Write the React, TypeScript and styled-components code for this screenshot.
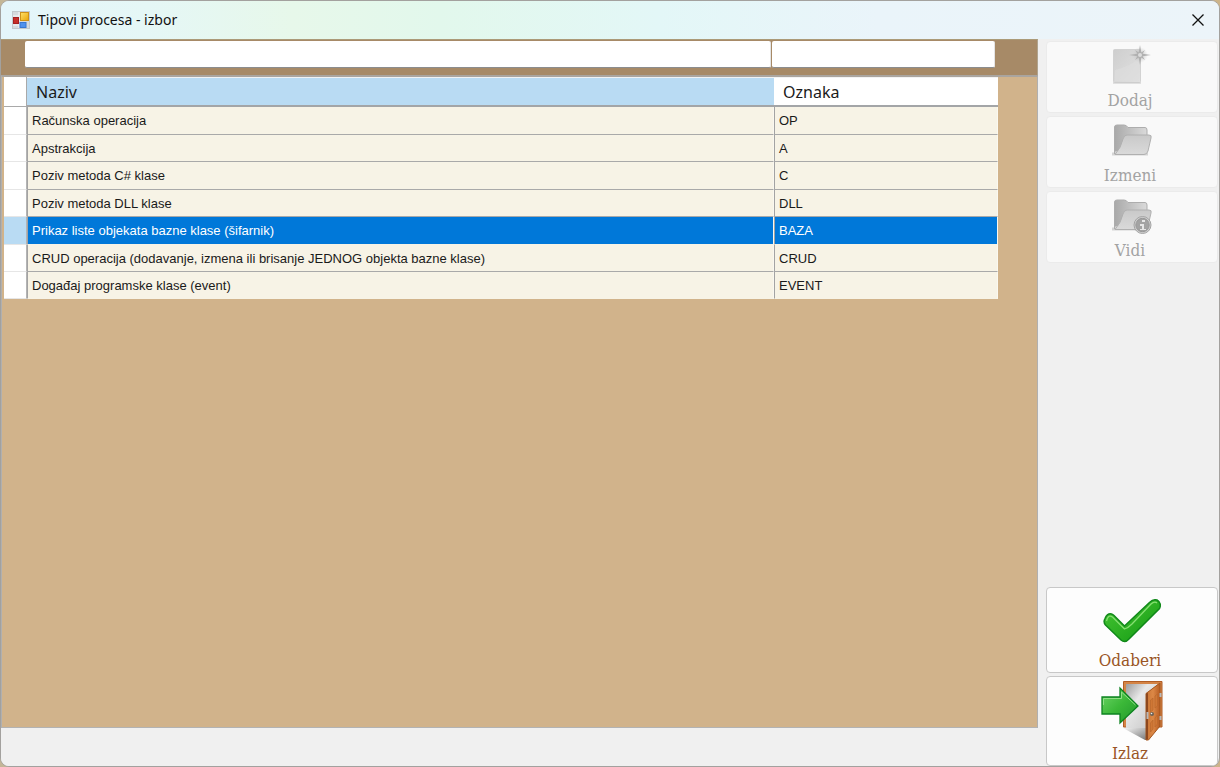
import React from "react";
import styled, { createGlobalStyle } from "styled-components";

const GlobalStyle = createGlobalStyle`
  *, *::before, *::after { box-sizing: border-box; }
  body { margin: 0; background: #b9b0a0; font-family: "Liberation Sans", Arial, sans-serif; }
`;

const Backdrop = styled.div`
  display: flex;
  min-height: 100vh;
  background: linear-gradient(90deg, #c4b697 0%, #a9a59f 12%, #a9a59f 80%, #cdb48a 100%);
`;

const Window = styled.section`
  flex: 1;
  min-width: 0;
  display: flex;
  flex-direction: column;
  border: 1px solid #a3a19e;
  border-radius: 9px;
  overflow: hidden;
  background: #f0f0f0;
`;

const TitleBar = styled.header`
  display: flex;
  align-items: center;
  height: 38px;
  padding-left: 11px;
  gap: 8px;
  background: linear-gradient(90deg, #e4f5fa 0%, #e5f7f6 12%, #e7f8ea 24%, #e2f8ec 36%, #e3f7f7 54%, #eaf4fa 72%, #ecf4f9 100%);
`;

const Title = styled.h1`
  flex: 1;
  margin: 0;
  font: 400 14px/20px "Noto Sans", "Open Sans", sans-serif;
  color: #111;
`;

const CloseButton = styled.button`
  display: flex;
  align-items: center;
  justify-content: center;
  width: 42px;
  height: 38px;
  padding: 0;
  border: 0;
  background: transparent;
`;

const Content = styled.div`
  flex: 1;
  display: flex;
`;

const Main = styled.main`
  flex: 1;
  min-width: 0;
  display: flex;
  flex-direction: column;
`;

const FilterBar = styled.form`
  display: flex;
  gap: 1px;
  height: 36px;
  padding: 1px 42px 7px 24px;
  background: #a78a67;
  border-top: 1px solid #ab9a78;
  border-right: 1px solid #b0a48f;
`;

const FilterInput = styled.input<{ $width?: number }>`
  flex: ${(p) => (p.$width ? `0 0 ${p.$width}px` : "1")};
  min-width: 0;
  height: 27px;
  padding: 0 4px;
  border: 0;
  border-right: 1px solid #e4e4e4;
  border-bottom: 1px solid #8b8d8f;
  border-radius: 2px;
  background: #fff;
  font: 13px "Liberation Sans", Arial, sans-serif;
  outline: none;
`;

const GridArea = styled.div`
  flex: 1;
  padding: 0 39px 0 2px;
  border: 1px solid #b0b0b0;
  border-top: 2px solid #aaa59f;
  border-bottom-color: #b3b3b3;
  background: #d1b38b;
`;

const Table = styled.table`
  width: 100%;
  table-layout: fixed;
  border-collapse: separate;
  border-spacing: 0;
  text-align: left;
`;

const ColumnHead = styled.th<{ $active?: boolean }>`
  height: 30px;
  padding: 0 9px;
  border-bottom: 2px solid #a3a5a7;
  border-top: 1px solid #f2f2f2;
  background: ${(p) => (p.$active ? "#b9dbf3" : "#fff")};
  font: 400 16px/24px "Noto Sans", "Open Sans", sans-serif;
  color: #1b1b1b;
`;

const CornerHead = styled.td`
  background: #fff;
  border-right: 1px solid #a9a9a9;
  border-bottom: 1px solid #a9a9a9;
`;

const Row = styled.tr`
  height: 28px;
  &:nth-child(even), &:last-child { height: 27px; }
`;

const RowHead = styled.td<{ $selected?: boolean }>`
  padding: 0;
  background: ${(p) => (p.$selected ? "#b9dbf3" : "#fff")};
  border-right: 1px solid #b4b4b4;
  border-bottom: 1px solid #e6e6e6;
`;

const Cell = styled.td<{ $selected?: boolean }>`
  padding: 1px 4px 0;
  border-left: 1px solid #a3a3a3;
  border-right: 1px solid #faf8f0;
  border-bottom: 1px solid ${(p) => (p.$selected ? "#f7f3e6" : "#a9a9a9")};
  background: ${(p) => (p.$selected ? "#0078d9" : "#f7f3e6")};
  color: ${(p) => (p.$selected ? "#fff" : "#1a1a1a")};
  font: 13px/20px "Liberation Sans", Arial, sans-serif;
  white-space: nowrap;
  tr:last-child > & { border-bottom-color: #f7f3e6; }
`;

const Footer = styled.footer`
  height: 38px;
  background: #f0f0f0;
`;

const Sidebar = styled.aside`
  display: flex;
  flex-direction: column;
  justify-content: space-between;
  width: 181px;
  padding: 2px 1px 0 8px;
`;

const ButtonGroup = styled.div`
  display: flex;
  flex-direction: column;
  gap: 3px;
`;

const ActionButton = styled.button<{ $height: number; $gap?: number }>`
  display: flex;
  flex-direction: column;
  align-items: center;
  justify-content: flex-end;
  gap: ${(p) => p.$gap ?? 0}px;
  height: ${(p) => p.$height}px;
  padding: 0;
  border: 1px solid #c8c8c8;
  border-radius: 4px;
  background: #fdfdfd;
  color: #9a5526;
  font: 400 17px/24px "DejaVu Serif Condensed", "DejaVu Serif", serif;
  &:disabled {
    border-color: #ebebeb;
    background: #f9f9f9;
    color: #a3a3a3;
  }
`;

const Label = styled.span`
  padding-right: 4px;
`;

const FormIcon = () => (
  <svg width="18" height="18" viewBox="0 0 18 18" aria-hidden="true">
    <defs>
      <linearGradient id="gold" x2="1" y2="1"><stop stopColor="#ffe169" /><stop offset="1" stopColor="#e9a509" /></linearGradient>
    </defs>
    <rect x=".5" y=".5" width="17" height="17" fill="#d5dadd" stroke="#c2c9cd" />
    <path d="M1 5h6M1 14h6M7 1v16" stroke="#f5f7f8" />
    <rect x="1.500" y="6.500" width="5" height="6" fill="#c52f29" stroke="#a61f20" />
    <rect x="8.500" y="1.500" width="8" height="8" fill="url(#gold)" stroke="#cf9219" />
    <rect x="8" y="11.500" width="6" height="5" fill="#4f91ed" stroke="#3777d2" />
  </svg>
);

const CloseIcon = () => (
  <svg width="12" height="12" viewBox="0 0 12 12" aria-hidden="true">
    <path d="M.5.5 11.500 11.500M11.500.5.5 11.500" stroke="#111" strokeWidth="1.300" />
  </svg>
);

const NewIcon = () => (
  <svg width="40" height="40" viewBox="0 0 40 40" aria-hidden="true">
    <defs>
      <linearGradient id="page" x2="1" y2="1"><stop stopColor="#cecece" /><stop offset="1" stopColor="#e1e1e1" /></linearGradient>
      <radialGradient id="glow"><stop stopColor="#b0b0b0" /><stop offset="1" stopColor="#d0d0d0" stopOpacity="0" /></radialGradient>
    </defs>
    <rect x="1.500" y="4.500" width="27" height="33" rx="1" fill="url(#page)" stroke="#d2d2d2" />
    <path d="M3 25Q19 21 27 13V36H3Z" fill="#dedede" opacity=".6" />
    <path d="M1 38h28" stroke="#c8c8c8" />
    <circle cx="28" cy="10" r="8" fill="url(#glow)" />
    <path d="M28 0 29.300 7.500 33 5 30.500 8.700 39 10 30.500 11.300 33 15 29.300 12.500 28 20 26.700 12.500 23 15 25.500 11.300 17 10 25.500 8.700 23 5 26.700 7.500Z" fill="#b0b0b0" />
    <circle cx="28" cy="10" r="2" fill="#dcdcdc" />
  </svg>
);

const FolderIcon = ({ info = false }: { info?: boolean }) => {
  const id = info ? "view" : "edit";
  return (
    <svg width="40" height="38" viewBox="0 0 40 38" aria-hidden="true">
      <defs>
        <linearGradient id={`${id}-back`} x2="1"><stop stopColor="#a9a9a9" /><stop offset="1" stopColor="#dadada" /></linearGradient>
        <linearGradient id={`${id}-front`} x2="0" y2="1"><stop stopColor="#c9c9c9" /><stop offset="1" stopColor="#dadada" /></linearGradient>
      </defs>
      <path d="M0 32h36" stroke="#d5d5d5" strokeWidth="3" />
      <path d="M2.500 32V5Q2.500 3 5 3H12Q14.500 3 16 5.500H33Q35 5.500 35 8V29H3Z" fill={`url(#${id}-back)`} stroke="#adadad" />
      <path d="M3 32.500Q9 26 11 17Q12 13 15 13H37Q40 13 39 16L36 29Q35 32.500 32 32.500Z" fill={`url(#${id}-front)`} stroke="#b0b0b0" />
      {info && (
        <g>
          <circle cx="30.500" cy="28" r="8.500" fill="#d0d0d0" stroke="#a3a3a3" />
          <circle cx="30.500" cy="28" r="6.700" fill="#a3a3a3" stroke="#999" />
          <path d="M30 23h3v2h-3zM28 27h4v5h2v1h-6v-1h2v-3h-2z" fill="#e6e6e6" />
        </g>
      )}
    </svg>
  );
};

const CheckIcon = () => (
  <svg width="58" height="44" viewBox="0 0 58 44" aria-hidden="true">
    <defs>
      <linearGradient id="check" x2="1" y2="1"><stop stopColor="#49c735" /><stop offset="1" stopColor="#119911" /></linearGradient>
    </defs>
    <path d="M2 19.500Q4.500 14 8.500 15Q10 15.500 11 16.500L21.500 27 47 3Q50 0 54 1Q59 4 56.500 9.500L26 40Q22 44.500 18 41L2.500 26Q0 23 2 19.500Z" fill="url(#check)" stroke="#11891a" strokeWidth="1.500" />
    <path d="M3.500 22Q5 15 9.500 18L21.500 30Q25 29 29 25L48 5Q51.500 2 54 4" fill="none" stroke="#86df72" strokeWidth="1.300" />
  </svg>
);

const ExitIcon = () => (
  <svg width="62" height="60" viewBox="0 0 62 60" aria-hidden="true">
    <defs>
      <linearGradient id="room" x2="1" y2="1"><stop stopColor="#9c9c9c" /><stop offset=".35" stopColor="#e8e8e8" /><stop offset="1" stopColor="#c4c4c4" /></linearGradient>
      <linearGradient id="floor" x2="1" y2="1"><stop stopColor="#f6f6f6" /><stop offset="1" stopColor="#777" /></linearGradient>
      <linearGradient id="door" x2="1"><stop stopColor="#c97535" /><stop offset=".5" stopColor="#dc8846" /><stop offset="1" stopColor="#b75d23" /></linearGradient>
      <linearGradient id="arrow" x2="1" y2="1"><stop stopColor="#70d66a" /><stop offset=".5" stopColor="#3bb838" /><stop offset="1" stopColor="#20962c" /></linearGradient>
    </defs>
    <path d="M22.500.500H61V46H22.500Z" fill="#d48446" stroke="#b05c24" />
    <path d="M25 3H57L45 13V47H25Z" fill="url(#room)" />
    <path d="M22 47H46V59H44Z" fill="url(#floor)" />
    <path d="M45 12.500 59 2V45L47.500 59H45Z" fill="url(#door)" stroke="#a3561f" />
    <path d="M45 12.500 47 12V58.500H45Z" fill="#8e481e" />
    <path d="M49.500 19 52 17V29L49.500 31ZM54 15 56.500 13V25L54 27ZM49.500 42 52 39V48L49.500 51ZM54 37 56.500 34V43L54 46Z" fill="#cf7735" stroke="#b9672c" strokeWidth=".7" />
    <path d="M59.500 12v4M59.500 35v4M46.500 31v7" stroke="#b8b8b8" strokeWidth="2" />
    <circle cx="51" cy="33" r="2" fill="#6e6255" />
    <circle cx="50.500" cy="32.500" r=".8" fill="#eee" />
    <path d="M1 16H19V7L37 25 19 42V33H1Z" fill="url(#arrow)" stroke="#0d8220" strokeWidth="1.300" />
    <path d="M2.500 24V17.500H20.500V11L34.500 24" fill="none" stroke="#90df85" />
  </svg>
);

const rows = [
  ["Računska operacija", "OP"],
  ["Apstrakcija", "A"],
  ["Poziv metoda C# klase", "C"],
  ["Poziv metoda DLL klase", "DLL"],
  ["Prikaz liste objekata bazne klase (šifarnik)", "BAZA"],
  ["CRUD operacija (dodavanje, izmena ili brisanje JEDNOG objekta bazne klase)", "CRUD"],
  ["Događaj programske klase (event)", "EVENT"],
];
const selectedCode = "BAZA";

export default function App() {
  return (
    <>
      <GlobalStyle />
      <Backdrop>
        <Window>
          <TitleBar>
            <FormIcon />
            <Title>Tipovi procesa - izbor</Title>
            <CloseButton type="button" aria-label="Zatvori"><CloseIcon /></CloseButton>
          </TitleBar>
          <Content>
            <Main>
              <FilterBar>
                <FilterInput type="text" aria-label="Naziv" />
                <FilterInput type="text" aria-label="Oznaka" $width={223} />
              </FilterBar>
              <GridArea>
                <Table>
                  <colgroup>
                    <col style={{ width: 23 }} />
                    <col />
                    <col style={{ width: 224 }} />
                  </colgroup>
                  <thead>
                    <tr>
                      <CornerHead />
                      <ColumnHead scope="col" $active>Naziv</ColumnHead>
                      <ColumnHead scope="col">Oznaka</ColumnHead>
                    </tr>
                  </thead>
                  <tbody>
                    {rows.map(([name, code]) => {
                      const selected = code === selectedCode;
                      return (
                        <Row key={code} aria-selected={selected}>
                          <RowHead $selected={selected} />
                          <Cell $selected={selected}>{name}</Cell>
                          <Cell $selected={selected}>{code}</Cell>
                        </Row>
                      );
                    })}
                  </tbody>
                </Table>
              </GridArea>
              <Footer />
            </Main>
            <Sidebar>
              <ButtonGroup>
                <ActionButton type="button" $height={72} $gap={3} disabled><NewIcon /><Label>Dodaj</Label></ActionButton>
                <ActionButton type="button" $height={72} $gap={3} disabled><FolderIcon /><Label>Izmeni</Label></ActionButton>
                <ActionButton type="button" $height={72} $gap={3} disabled><FolderIcon info /><Label>Vidi</Label></ActionButton>
              </ButtonGroup>
              <ButtonGroup>
                <ActionButton type="button" $height={86} $gap={5}><CheckIcon /><Label>Odaberi</Label></ActionButton>
                <ActionButton type="button" $height={90}><ExitIcon /><Label>Izlaz</Label></ActionButton>
              </ButtonGroup>
            </Sidebar>
          </Content>
        </Window>
      </Backdrop>
    </>
  );
}
